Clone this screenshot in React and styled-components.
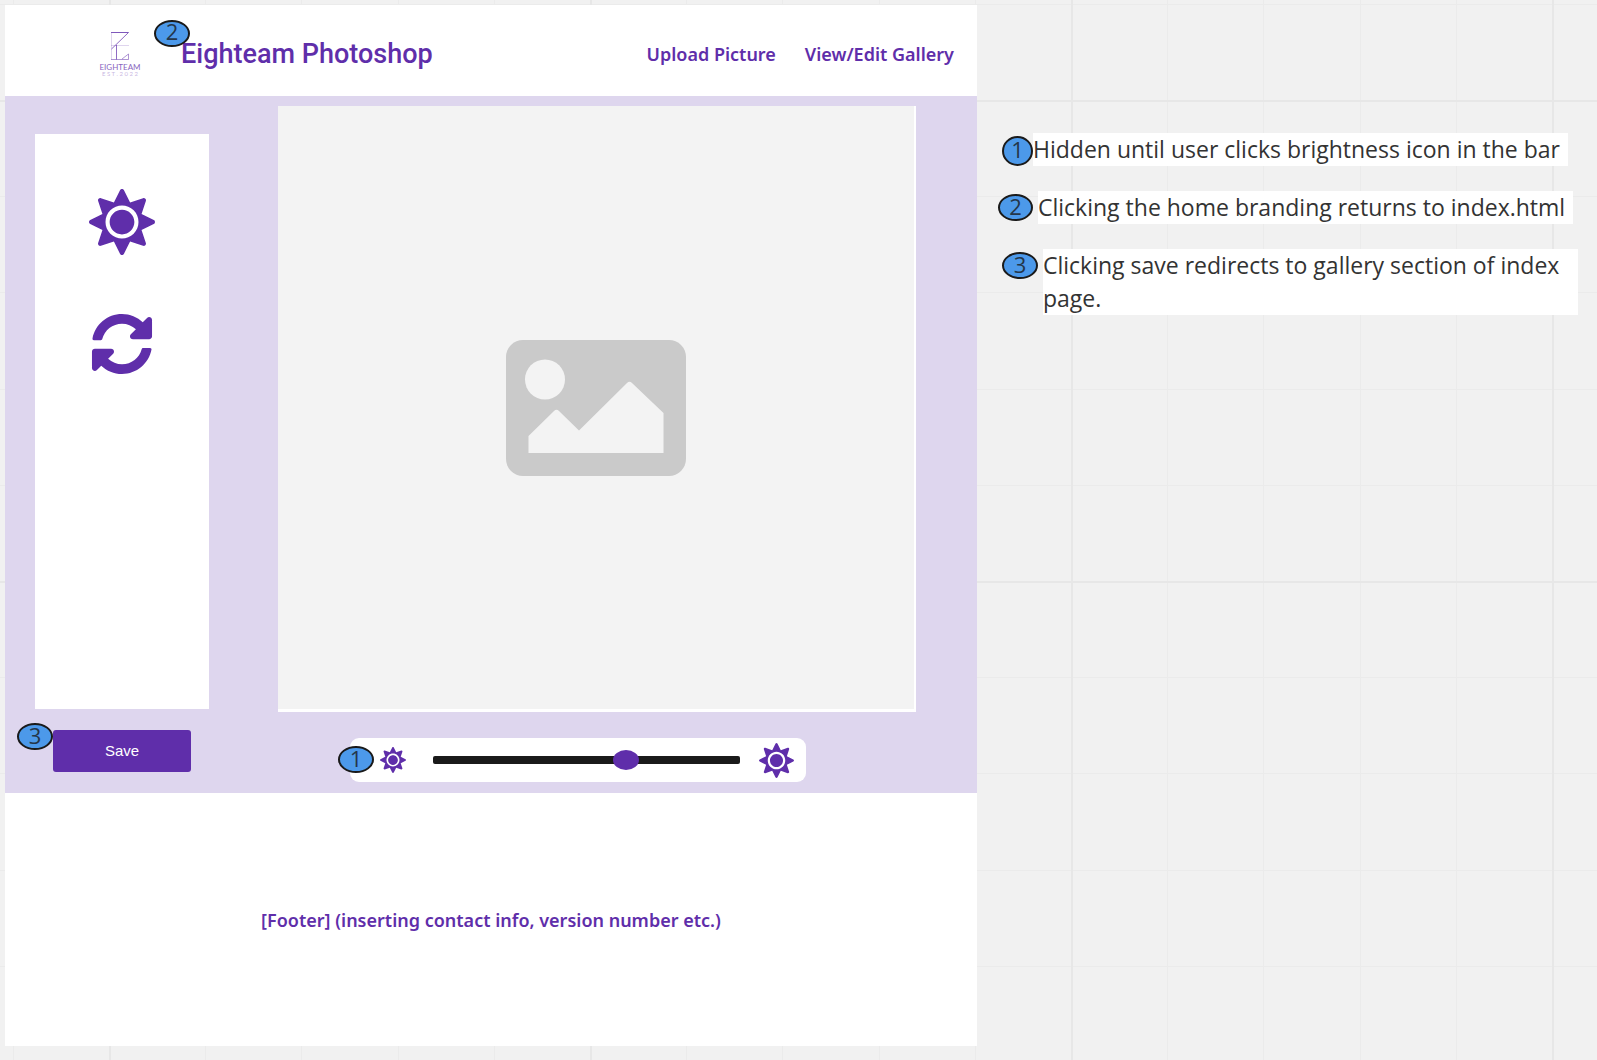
import React, { useState } from "react";
import styled, { createGlobalStyle } from "styled-components";
import { FaSun, FaSyncAlt } from "react-icons/fa";

const purple = "#5f2eaa";
const lilac = "#ded6ee";
const ink = "#1a1a1a";

const GlobalStyle = createGlobalStyle`
  *, *::before, *::after { box-sizing: border-box; }
  body {
    margin: 0;
    background-color: #f1f1f1;
    font-family: "Open Sans", "Noto Sans", sans-serif;
    color: ${ink};
  }
`;

const minorLines = "transparent 96px, #ebebeb 96px 97px, transparent 97px 192px, #ebebeb 192px 193px, transparent 193px 289px, #ebebeb 289px 290px, transparent 290px 385px, #ebebeb 385px 386px, transparent 386px";

const Board = styled.div`
  min-height: 100vh;
  display: grid;
  grid-template-columns: minmax(0, 972fr) minmax(0, 599fr);
  gap: 21px;
  align-items: start;
  padding: 5px 0 14px 5px;
  background-color: #f1f1f1;
  background-image:
    linear-gradient(to right, #e7e7e7 2px, transparent 2px),
    linear-gradient(to bottom, #e7e7e7 2px, transparent 2px),
    linear-gradient(to right, ${minorLines}),
    linear-gradient(to bottom, ${minorLines});
  background-size: 481px 481px;
  background-position: 109px 100px;
`;

const Wireframe = styled.div`
  background: #fff;
`;

const Header = styled.header`
  height: 91px;
  display: flex;
  align-items: center;
  justify-content: space-between;
  padding: 6px 23px 0 94px;
`;

const Brand = styled.a`
  display: flex;
  align-items: center;
  gap: 39px;
  color: ${purple};
  text-decoration: none;
`;

const Title = styled.h1`
  position: relative;
  margin: 0;
  font: 500 27px/36px Roboto, sans-serif;
  white-space: nowrap;
`;

const Nav = styled.nav`
  display: flex;
  gap: 29px;
`;

const NavLink = styled.a`
  color: ${purple};
  font: 600 18px/26px "Noto Sans", sans-serif;
  text-decoration: none;
  white-space: nowrap;
`;

const Editor = styled.main`
  display: grid;
  grid-template-columns: 174px minmax(0, 1fr);
  gap: 69px;
  padding: 10px 61px 11px 30px;
  background: ${lilac};
`;

const ToolColumn = styled.div`
  display: flex;
  flex-direction: column;
  align-items: center;
  gap: 21px;
  padding: 28px 0 10px;
`;

const Toolbar = styled.div`
  flex: 1;
  align-self: stretch;
  display: flex;
  flex-direction: column;
  align-items: center;
  gap: 56px;
  padding-top: 55px;
  background: #fff;
`;

const ToolButton = styled.button`
  display: flex;
  align-items: center;
  justify-content: center;
  height: 66px;
  padding: 0;
  border: 0;
  background: none;
  color: ${purple};
  cursor: pointer;
`;

const SaveArea = styled.div`
  position: relative;
`;

const SaveButton = styled.button`
  display: block;
  width: 138px;
  height: 42px;
  padding: 0;
  border: 0;
  border-radius: 3px;
  background: ${purple};
  color: #fff;
  font: 15px/20px "Liberation Sans", Arial, sans-serif;
  cursor: pointer;
`;

const CanvasColumn = styled.div`
  display: flex;
  flex-direction: column;
  gap: 26px;
`;

const Canvas = styled.div`
  height: 606px;
  display: flex;
  align-items: center;
  justify-content: center;
  border: solid #fff;
  border-width: 0 2px 3px 0;
  background: #f3f3f3;
`;

const BrightnessBar = styled.div`
  position: relative;
  height: 44px;
  display: flex;
  align-items: center;
  margin: 0 110px 0 72px;
  padding: 0 12px 0 30px;
  border-radius: 9px;
  background: #fff;
  color: ${purple};
`;

const Slider = styled.input`
  flex: 1;
  min-width: 0;
  height: 20px;
  margin: 0 19px 0 27px;
  appearance: none;
  background: none;

  &::-webkit-slider-runnable-track {
    height: 8px;
    border-radius: 2px;
    background: ${ink};
  }
  &::-webkit-slider-thumb {
    appearance: none;
    width: 26px;
    height: 20px;
    margin-top: -6px;
    border-radius: 50%;
    background: ${purple};
  }
`;

const Footer = styled.footer`
  height: 253px;
  display: flex;
  align-items: center;
  justify-content: center;
  color: ${purple};
  font: 600 18px/26px "Noto Sans", sans-serif;
`;

const Badge = styled.span`
  flex: none;
  display: flex;
  align-items: center;
  justify-content: center;
  width: ${(p) => p.$width || 36}px;
  height: ${(p) => p.$height || 27}px;
  padding-bottom: 4px;
  border: 2px solid ${ink};
  border-radius: 50%;
  background: #4c99ea;
  color: #24364a;
  font: 400 22px/22px "Open Sans", sans-serif;
`;

const PinnedBadge = styled(Badge)`
  position: absolute;
  left: ${(p) => p.$left}px;
  top: ${(p) => p.$top}px;
`;

const Notes = styled.ol`
  display: flex;
  flex-direction: column;
  gap: 25px;
  margin: 0;
  padding: 128px 0 0;
  list-style: none;
`;

const Note = styled.li`
  display: flex;
  gap: ${(p) => p.$gap}px;
  padding-left: ${(p) => p.$indent}px;
`;

const NoteBadge = styled(Badge)`
  margin-top: 3px;
`;

const NoteText = styled.p`
  flex: 0 1 535px;
  margin: 0;
  background: #fff;
  font: 400 23px/33px "Open Sans", sans-serif;
  color: #333;
`;

const Logo = () => (
  <svg width="43" height="46" viewBox="0 0 43 46" fill="none" stroke={purple} strokeWidth="1" role="img" aria-label="Eighteam, established 2022">
    <path d="M12 1.5H29.5" opacity=".8" />
    <path d="M29.5 1.5L12.5 18" opacity=".7" />
    <path d="M12.500 2V28.500M12 14.500H30" opacity=".2" />
    <path d="M17.500 14V28.500" opacity=".7" />
    <path d="M12 28.500H29.500V23L23 28" opacity=".5" />
    <g fill={purple} stroke="none" fontFamily="Lato, sans-serif" textAnchor="middle">
      <text x="21" y="39" fontSize="8" opacity=".75">EIGHTEAM</text>
      <text x="21" y="45" fontSize="6" opacity=".35">E S T . 2 0 2 2</text>
    </g>
  </svg>
);

const ImagePlaceholder = () => (
  <svg width="180" height="136" viewBox="0 0 180 136" role="img" aria-label="Image placeholder">
    <rect width="180" height="136" rx="17" fill="#cacaca" />
    <circle cx="39" cy="39.500" r="20" fill="#f3f3f3" />
    <path d="M22.500 113V96L48 71Q50.500 68.500 53 71L73 90.500L121 43Q123.500 40.500 126 43L157.500 73V113Z" fill="#f3f3f3" />
  </svg>
);

const notes = [
  { text: "Hidden until user clicks brightness icon in the bar", indent: 4, gap: 0, width: 31, height: 30 },
  { text: "Clicking the home branding returns to index.html", indent: 0, gap: 5, width: 35, height: 27 },
  { text: "Clicking save redirects to gallery section of index page.", indent: 4, gap: 5, width: 36, height: 27 },
];

export default function App() {
  const [brightness, setBrightness] = useState(64);

  return (
    <Board>
      <GlobalStyle />
      <Wireframe>
        <Header>
          <Brand href="#index">
            <Logo />
            <Title>
              Eighteam Photoshop
              <PinnedBadge $left={-27} $top={-16}>2</PinnedBadge>
            </Title>
          </Brand>
          <Nav>
            <NavLink href="#upload">Upload Picture</NavLink>
            <NavLink href="#gallery">View/Edit Gallery</NavLink>
          </Nav>
        </Header>

        <Editor>
          <ToolColumn>
            <Toolbar>
              <ToolButton type="button" aria-label="Brightness">
                <FaSun size={66} />
              </ToolButton>
              <ToolButton type="button" aria-label="Rotate">
                <FaSyncAlt size={62} />
              </ToolButton>
            </Toolbar>
            <SaveArea>
              <SaveButton type="button">Save</SaveButton>
              <PinnedBadge $left={-36} $top={-7}>3</PinnedBadge>
            </SaveArea>
          </ToolColumn>

          <CanvasColumn>
            <Canvas>
              <ImagePlaceholder />
            </Canvas>
            <BrightnessBar>
              <PinnedBadge $left={-12} $top={8}>1</PinnedBadge>
              <FaSun size={26} />
              <Slider
                type="range"
                aria-label="Brightness level"
                value={brightness}
                onChange={(e) => setBrightness(Number(e.target.value))}
              />
              <FaSun size={35} />
            </BrightnessBar>
          </CanvasColumn>
        </Editor>

        <Footer>[Footer] (inserting contact info, version number etc.)</Footer>
      </Wireframe>

      <Notes>
        {notes.map((note, i) => (
          <Note key={note.text} $indent={note.indent} $gap={note.gap}>
            <NoteBadge $width={note.width} $height={note.height}>{i + 1}</NoteBadge>
            <NoteText>{note.text}</NoteText>
          </Note>
        ))}
      </Notes>
    </Board>
  );
}
